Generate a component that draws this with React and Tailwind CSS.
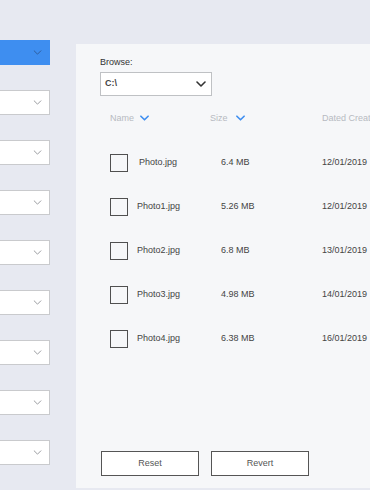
import { useState } from "react";

const files = [
  { name: "Photo.jpg", size: "6.4 MB", date: "12/01/2019", pad: true },
  { name: "Photo1.jpg", size: "5.26 MB", date: "12/01/2019" },
  { name: "Photo2.jpg", size: "6.8 MB", date: "13/01/2019" },
  { name: "Photo3.jpg", size: "4.98 MB", date: "14/01/2019" },
  { name: "Photo4.jpg", size: "6.38 MB", date: "16/01/2019" },
];

function Chevron({ className, strokeWidth = 1.2 }) {
  return (
    <svg viewBox="0 0 10 6" className={className} fill="none">
      <path d="M1 1 L5 5 L9 1" stroke="currentColor" strokeWidth={strokeWidth} strokeLinecap="round" strokeLinejoin="round" />
    </svg>
  );
}

function SideSelect({ active }) {
  return (
    <div
      className={
        active
          ? "h-[25px] w-[50px] bg-[#3e8ef0] flex items-center justify-end pr-[8px] text-[#2f5f9e]"
          : "h-[25px] w-[50px] bg-white border border-[#c9cacd] border-l-0 flex items-center justify-end pr-[7px] text-[#9a9ca0]"
      }
    >
      <Chevron className="w-[9px] h-[5px]" />
    </div>
  );
}

export default function App() {
  const [checked, setChecked] = useState({});

  return (
    <div
      className="w-[370px] h-[490px] bg-[#e7e9f1] overflow-hidden"
      style={{ fontFamily: '"Liberation Sans", Arial, sans-serif' }}
    >
      <div className="flex items-start pt-[40px]">
        {/* sidebar selects */}
        <div className="flex flex-col gap-[25px] w-[50px] shrink-0">
          {Array.from({ length: 9 }).map((_, i) => (
            <SideSelect key={i} active={i === 0} />
          ))}
        </div>

        {/* browse panel */}
        <div className="ml-[26px] mt-[4px] flex-1 h-[444px] bg-[#f6f7f9] pl-[24px] flex flex-col">
          <div className="mt-[12px] text-[9px] text-[#333]">Browse:</div>
          <div className="mt-[2px] w-[112px] h-[24px] bg-white border border-[#bfc1c4] flex items-center justify-between pl-[4px] pr-[5px]">
            <span className="text-[9px] font-bold text-[#444]">C:\</span>
            <Chevron className="w-[10px] h-[6px] text-[#333]" strokeWidth={1.6} />
          </div>

          {/* header */}
          <div className="flex items-center mt-[16px] pl-[10px] text-[9px] text-[#b6bac1] whitespace-nowrap">
            <div className="w-[100px] flex items-center gap-[6px]">
              Name
              <Chevron className="w-[9px] h-[6px] text-[#3e8ef0]" strokeWidth={1.8} />
            </div>
            <div className="w-[112px] flex items-center gap-[8px]">
              Size
              <Chevron className="w-[9px] h-[6px] text-[#3e8ef0]" strokeWidth={1.8} />
            </div>
            <div>Dated Created</div>
          </div>

          {/* rows */}
          <div className="mt-[29px] flex flex-col gap-[26px] pl-[10px] text-[9px] text-[#444] whitespace-nowrap">
            {files.map((f, i) => (
              <div key={f.name} className="flex items-center h-[18px]">
                <button
                  onClick={() => setChecked({ ...checked, [i]: !checked[i] })}
                  className="w-[18px] h-[18px] border-[1.5px] border-[#505050] bg-transparent shrink-0"
                />
                <div className={f.pad ? "w-[93px] pl-[11px]" : "w-[93px] pl-[9px]"}>{f.name}</div>
                <div className="w-[101px]">{f.size}</div>
                <div>{f.date}</div>
              </div>
            ))}
          </div>

          {/* actions */}
          <div className="mt-auto mb-[12px] flex gap-[12px] pl-[1px]">
            <button className="w-[98px] h-[25px] bg-white border border-[#555] text-[9px] text-[#555] shrink-0">
              Reset
            </button>
            <button className="w-[98px] h-[25px] bg-white border border-[#555] text-[9px] text-[#555] shrink-0">
              Revert
            </button>
          </div>
        </div>
      </div>
    </div>
  );
}
